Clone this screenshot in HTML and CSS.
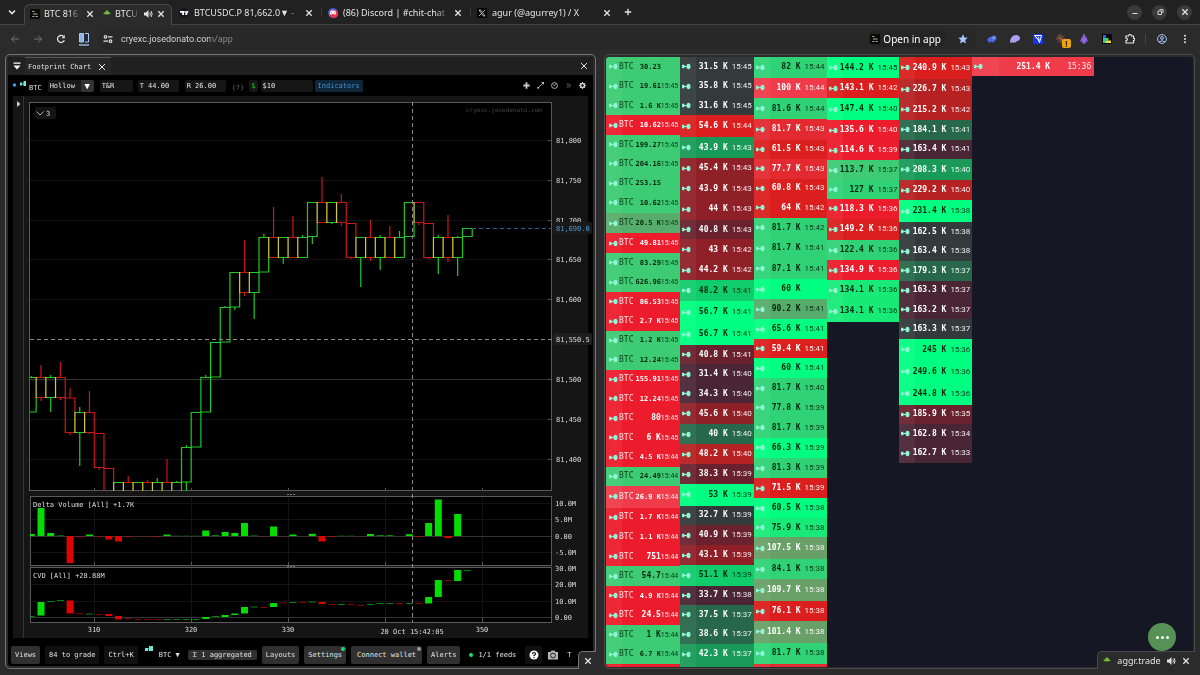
FILE: index.html
```html
<!DOCTYPE html>
<html lang="en">
<head>
<meta charset="utf-8">
<title>BTC 81,690.0</title>
<link rel="stylesheet" href="styles.css">
</head>
<body>
<svg class="sprite" aria-hidden="true">
  <symbol id="close" viewBox="0 0 10 10"><path d="M2.300 2.300l5.400 5.400M7.700 2.300l-5.400 5.400" fill="none" stroke="currentColor" stroke-width="1.300"/></symbol>
  <symbol id="speaker" viewBox="0 0 10 10"><path d="M1 3.500h2L5.500 1v8L3 6.500H1z" fill="currentColor"/><path d="M6.800 3.500q1.200 1.500 0 3M8 2q2.300 3 0 6" fill="none" stroke="currentColor" stroke-width="1"/></symbol>
  <symbol id="dumbbell" viewBox="0 0 9 7"><path d="M0 1.800h2.400v3.400H0z" fill="currentColor"/><path d="M2 3.500h4" stroke="currentColor" stroke-width="1.200"/><ellipse cx="6.500" cy="3.500" rx="2" ry="2.800" fill="currentColor"/></symbol>
  <symbol id="crylogo" viewBox="0 0 10 10"><rect width="10" height="10" rx="1" fill="#0a0a0a"/><path d="M2.200 2.500h2.300M3 5h4.500M2.300 7.500h2M5.500 7.500h2.200" stroke="#d5c3a0" stroke-width=".9"/></symbol>
  <symbol id="aggrlogo" viewBox="0 0 10 10"><path d="M5 1l4 4H1z" fill="#76b53f"/><path d="M3.500 5h3v1h-3z" fill="#4d7d2b"/></symbol>
</svg>

<header class="tabstrip">
  <button class="ghost tab-search" aria-label="Search tabs"><svg class="ico" viewBox="0 0 10 10"><path d="M2 3.500l3 3 3-3" fill="none" stroke="currentColor" stroke-width="1.600"/></svg></button>
  <div class="tab-group">
    <div class="tab tab-first"><svg class="ico"><use href="#crylogo"/></svg><span class="tab-title fade">BTC 816</span><button class="ghost" aria-label="Close"><svg class="ico"><use href="#close"/></svg></button></div>
    <div class="tab tab-second"><svg class="ico"><use href="#aggrlogo"/></svg><span class="tab-title fade">BTCU</span><svg class="ico"><use href="#speaker"/></svg><button class="ghost" aria-label="Close"><svg class="ico"><use href="#close"/></svg></button></div>
  </div>
  <div class="tab wide"><svg class="ico" viewBox="0 0 10 10"><rect width="10" height="10" rx="5" fill="#12151d"/><path d="M1 3h4v4H3.200V4.700H1z" fill="#fff"/><circle cx="6.100" cy="3.900" r=".9" fill="#fff"/><path d="M7.500 3h2L7.900 7H6z" fill="#fff"/></svg><span class="tab-title fade">BTCUSDC.P 81,662.0▼ -</span><button class="ghost" aria-label="Close"><svg class="ico"><use href="#close"/></svg></button></div>
  <div class="tab wide"><svg class="ico" viewBox="0 0 10 10"><circle cx="5" cy="5" r="4.800" fill="#5865f2"/><circle cx="6" cy="6" r="4" fill="#e8364a"/><path d="M2.500 3q2.500-1 5 0l.7 3-1.500.8-.7-.8H4l-.700.8L1.800 6z" fill="#fff"/><path d="M3.500 4.300v1M6.300 4.300v1" stroke="#e8364a"/></svg><span class="tab-title fade">(86) Discord | #chit-chat</span><button class="ghost" aria-label="Close"><svg class="ico"><use href="#close"/></svg></button></div>
  <div class="tab wide"><svg class="ico" viewBox="0 0 10 10"><rect width="10" height="10" rx="1" fill="#050505"/><path d="M2 2h1.700L8 8H6.300z" fill="none" stroke="#ddd" stroke-width=".8"/><path d="M8 2L5.600 4.600M4.400 5.600L2 8" stroke="#ddd" stroke-width=".8"/></svg><span class="tab-title">agur (@agurrey1) / X</span><button class="ghost" aria-label="Close"><svg class="ico"><use href="#close"/></svg></button></div>
  <button class="ghost new-tab" aria-label="New tab"><svg class="ico" viewBox="0 0 10 10"><path d="M5 1.800v6.400M1.800 5h6.400" stroke="currentColor" stroke-width="1.300"/></svg></button>
  <div class="window-controls">
    <button aria-label="Minimise"><svg class="ico" viewBox="0 0 10 10"><path d="M2.500 6.500h5" stroke="currentColor"/></svg></button>
    <button aria-label="Restore"><svg class="ico" viewBox="0 0 10 10"><path d="M3 4h3.500v3.500H3zM4.500 2.600H8V6" fill="none" stroke="currentColor" stroke-width=".9"/></svg></button>
    <button aria-label="Close window"><svg class="ico"><use href="#close"/></svg></button>
  </div>
</header>

<nav class="toolbar">
  <button class="ghost nav dim" aria-label="Back"><svg class="ico" viewBox="0 0 10 10"><path d="M9 5H1.500M5 1.500L1.500 5 5 8.500" fill="none" stroke="currentColor"/></svg></button>
  <button class="ghost nav dim" aria-label="Forward"><svg class="ico" viewBox="0 0 10 10"><path d="M1 5h7.500M5 1.500L8.500 5 5 8.500" fill="none" stroke="currentColor"/></svg></button>
  <button class="ghost nav" aria-label="Reload"><svg class="ico" viewBox="0 0 10 10"><path d="M8.300 6.200A3.500 3.500 0 1 1 7.500 2.500" fill="none" stroke="currentColor" stroke-width="1.300"/><path d="M8.800 1v3.200H5.600z" fill="currentColor"/></svg></button>
  <button class="ghost nav split" aria-label="Split view"><svg viewBox="0 0 12 14" width="12" height="14"><path d="M1.500 1.500h4v8.500h-4z" fill="#8fb4ea" stroke="#a8c7fa"/><path d="M7 1.500h3.500V10H7" fill="none" stroke="#a8c7fa"/><path d="M1 13h10" stroke="#a8c7fa" stroke-width="1.300"/></svg></button>
  <div class="omnibox">
    <button class="ghost site" aria-label="Site information"><svg class="ico" viewBox="0 0 10 10"><g fill="none" stroke="currentColor" stroke-width="1.200"><circle cx="2.500" cy="2.800" r="1.300"/><path d="M5 2.800h4.500M.5 7.200H5"/><circle cx="7.500" cy="7.200" r="1.300"/></g></svg></button>
    <input class="address" aria-label="Address" value="cryexc.josedonato.com/app">
    <button class="open-app"><svg class="ico"><use href="#crylogo"/></svg>Open in app</button>
    <button class="ghost star" aria-label="Bookmark"><svg class="ico" viewBox="0 0 10 10"><path d="M5 .3l1.400 3.200 3.400.3-2.600 2.300.8 3.500L5 7.800 2 9.600l.8-3.500L.2 3.800l3.400-.3z" fill="#a8c7fa"/></svg></button>
  </div>
  <div class="extensions">
    <button class="ghost" aria-label="Bird"><svg class="ico" viewBox="0 0 10 10"><path d="M0 6q2-4 5-3l2-2.500.6 2.300L10 4 8.500 6.500 6 8.500 4.500 8 2 8.500z" fill="#4a63e0"/><path d="M4 3l5-1-2 4z" fill="#7b93f5"/></svg></button>
    <button class="ghost" aria-label="Phantom"><svg class="ico" viewBox="0 0 10 10"><path d="M0 7.500Q1 1 6 1q4 0 4 3.500Q9.500 7 7 7 5.800 9 4.500 8.200 3 9.500 2.200 8.200.5 9.500 0 7.500z" fill="#ab9ff2"/></svg></button>
    <button class="ghost" aria-label="Pointer"><svg class="ico" viewBox="0 0 10 10"><rect width="10" height="10" rx="1" fill="#1436e8"/><path d="M1.500 1.500h7L6.500 8.500 5 5.500z" fill="none" stroke="#fff"/><path d="M2 2l4 4M5 2.500l1.500 4" stroke="#fff" stroke-width=".8"/></svg></button>
    <button class="ghost badge-host" aria-label="Alerts, 1 warning"><svg class="ico" viewBox="0 0 10 10"><path d="M5 0v10M0 5h10M1.500 1.500l7 7M8.500 1.500l-7 7M3 .5l4 9M.5 3l9 4" stroke="#a95c3c" stroke-width=".8"/></svg><span class="badge">!</span></button>
    <button class="ghost" aria-label="Flame"><svg class="ico" viewBox="0 0 10 10"><path d="M5 0l2.800 4L9 7 5 10 1 7l1.500-3z" fill="#7a53c9"/><path d="M5 0v10M2.500 4L5 7l3-3" stroke="#a98be8" stroke-width=".7" fill="none"/></svg></button>
    <button class="ghost" aria-label="Colour blocks"><svg class="ico" viewBox="0 0 10 10"><rect width="10" height="10" fill="#06080c"/><path d="M1 1h3v3H1z" fill="#2764f0"/><path d="M1 4h3v5H1z" fill="#27c9c0"/><path d="M4 4h2.500v2.500H4z" fill="#54d13c"/><path d="M4 6.500h5V9H4z" fill="#f2e02c"/></svg></button>
    <button class="ghost" aria-label="Extensions"><svg class="ico" viewBox="0 0 10 10"><path d="M1 2h2.500q0-1.500 1.500-1.500T6.500 2H8.500v2.200q1.200 0 1.200 1.200T8.500 6.600V9H1V6.700q1.400-.2 1.400-1.300T1 4.200z" fill="none" stroke="currentColor" stroke-width="1.200"/></svg></button>
    <i class="rule"></i>
    <button class="ghost" aria-label="Profile"><svg class="ico" viewBox="0 0 10 10"><g fill="none" stroke="#a8c7fa"><circle cx="5" cy="5" r="4.400"/><circle cx="5" cy="4" r="1.400"/><path d="M2 8q3-2.500 6 0"/></g></svg></button>
    <button class="ghost" aria-label="Menu"><svg class="ico" viewBox="0 0 10 10" fill="currentColor"><circle cx="5" cy="1.700" r="1"/><circle cx="5" cy="5" r="1"/><circle cx="5" cy="8.300" r="1"/></svg></button>
  </div>
</nav>

<main class="split-view">
  <section class="pane chart-pane">
    <div class="app">
      <div class="dock-head">
        <button class="ghost dock-menu" aria-label="Panel menu"><svg class="ico" viewBox="0 0 10 10"><path d="M1.500 2.200h7" stroke="#fff" stroke-width="1.200"/><path d="M1.500 4.500h7L5 8.500z" fill="#fff"/></svg></button>
        <div class="dock-tab"><span>Footprint Chart</span><button class="ghost" aria-label="Close tab"><svg class="ico" viewBox="0 0 10 10"><path d="M2 2l6 6M8 2l-6 6" stroke="currentColor"/></svg></button></div>
        <button class="ghost dock-close" aria-label="Close panel"><svg class="ico" viewBox="0 0 10 10"><path d="M2 2l6 6M8 2l-6 6" stroke="currentColor"/></svg></button>
      </div>
      <div class="chart-tools">
        <svg class="feed-mark" viewBox="0 0 14 8" width="14" height="8"><circle cx="2.500" cy="4" r="1.800" fill="#3b9df0"/><path d="M8 1.500h2v3H8zM10 3h2M11.500 0h2.500v5h-2.500z" fill="#6ce8d4"/><path d="M9 3h4" stroke="#6ce8d4"/></svg>
        <span class="symbol">BTC</span>
        <label class="combo"><select aria-label="Candle style"><option>Hollow</option></select><i>▼</i></label>
        <input class="field" aria-label="Preset" value="T&amp;R">
        <input class="field mid" aria-label="Ticks" value="T 44.00">
        <input class="field mid" aria-label="Range" value="R 26.00">
        <span class="hint">(?)</span>
        <button class="dollar">$</button>
        <input class="field long" aria-label="Minimum size" value="$10">
        <button class="indicators">Indicators</button>
        <div class="tool-icons">
          <button class="ghost" aria-label="Add"><svg class="ico small" viewBox="0 0 10 10"><path d="M5 .5v9M.5 5h9" stroke="currentColor" stroke-width="2.600"/></svg></button>
          <button class="ghost" aria-label="Draw"><svg class="ico small" viewBox="0 0 10 10"><path d="M2 8l6-6" stroke="currentColor" stroke-width="1.200"/><circle cx="1.700" cy="8.300" r="1.400" fill="currentColor"/><path d="M6 0h4v4z" fill="currentColor"/></svg></button>
          <button class="ghost" aria-label="Time"><svg class="ico small" viewBox="0 0 10 10"><g fill="none" stroke="currentColor" stroke-width="1.200"><circle cx="5" cy="5" r="4.200"/><path d="M5 5l2-2.500M5 5L3 4"/></g></svg></button>
          <button class="ghost faded" aria-label="More"><svg class="ico small" viewBox="0 0 10 10"><path d="M2.500 2L5 5 2.500 8M5.500 2L8 5 5.500 8" fill="none" stroke="currentColor" stroke-width="1.200"/></svg></button>
          <button class="ghost" aria-label="Chart settings"><svg class="ico small" viewBox="0 0 10 10"><circle cx="5" cy="5" r="2.800" fill="none" stroke="currentColor" stroke-width="2.200"/><path d="M5 0v2M5 8v2M0 5h2M8 5h2M1.500 1.500l1.400 1.400M7.100 7.100l1.400 1.400M8.500 1.500L7.100 2.900M2.900 7.100L1.500 8.500" stroke="currentColor" stroke-width="1.600"/></svg></button>
        </div>
      </div>
      <div class="chart-body">
        <button class="ghost drawer" aria-label="Open drawer"><svg class="ico" viewBox="0 0 10 10"><path d="M4 2l3.500 3L4 8z" fill="#ccc"/></svg></button>
        <svg id="chart" class="chart" viewBox="24 96 564 542" role="img" aria-label="Footprint chart"></svg>
      </div>
      <footer class="status">
        <button class="btn">Views</button>
        <button class="btn quiet">84 to grade</button>
        <button class="btn quiet">Ctrl+K</button>
        <svg class="status-mark" viewBox="0 0 9 8" width="9" height="8"><path d="M0 2h3v3H0zM4 0h4v5H4z" fill="#6ce8d4"/><path d="M2 3h4" stroke="#6ce8d4"/></svg>
        <button class="btn bare">BTC ▼</button>
        <button class="chip">Σ 1 aggregated</button>
        <button class="btn">Layouts</button>
        <button class="btn dotted">Settings<i class="dot on"></i></button>
        <button class="btn dotted roomy">Connect wallet<i class="dot"></i></button>
        <button class="btn">Alerts</button>
        <span class="feeds"><i></i>1/1 feeds</span>
        <button class="btn quiet square" aria-label="Help"><svg class="ico" viewBox="0 0 10 10"><circle cx="5" cy="5" r="4.500" fill="#fff"/><path d="M3.500 4q0-1.500 1.500-1.500T6.500 4Q6.500 5 5 5.200V6" fill="none" stroke="#111" stroke-width="1.200"/><circle cx="5" cy="7.500" r=".7" fill="#111"/></svg></button>
        <button class="ghost" aria-label="Screenshot"><svg viewBox="0 0 12 10" width="12" height="10"><path d="M1 2h2.500L4.500.5h3L8.500 2H11v7.500H1z" fill="#b5b5b5"/><circle cx="6" cy="5.500" r="2.400" fill="#b5b5b5" stroke="#222"/></svg></button>
        <span class="cut">T</span>
      </footer>
    </div>
    <div class="notch"><button class="ghost" aria-label="Close view"><svg class="ico"><use href="#close"/></svg></button></div>
  </section>

  <section class="pane feed-pane">
    <div id="feed" class="feed"></div>
    <button class="fab" aria-label="More options"><i></i><i></i><i></i></button>
    <div class="notch notch-wide"><svg class="ico"><use href="#aggrlogo"/></svg><span>aggr.trade</span><svg class="ico"><use href="#speaker"/></svg><button class="ghost" aria-label="Close view"><svg class="ico"><use href="#close"/></svg></button></div>
  </section>
</main>
<script src="app.js"></script>
</body>
</html>
```

FILE: styles.css
```css
* { box-sizing: border-box; }

:root {
  --ui: "Noto Sans", "Open Sans", sans-serif;
  --mono: "DejaVu Sans Mono", "Liberation Mono", monospace;
}

body {
  margin: 0;
  height: 100vh;
  display: flex;
  flex-direction: column;
  overflow: hidden;
  background: #2b2b2b;
  color: #e3e3e3;
  font: 9px/12px var(--ui);
}

button, input, select { font: inherit; color: inherit; margin: 0; }
.sprite { position: absolute; width: 0; height: 0; }
.ico { width: 10px; height: 10px; flex: none; display: block; }
.ico.small { width: 7px; height: 7px; }
.ghost {
  display: grid;
  place-items: center;
  padding: 0;
  border: 0;
  background: none;
  flex: none;
}
.dim { color: #757575; }
.faded { opacity: .6; }

/* Browser tabs */
.tabstrip {
  display: flex;
  align-items: stretch;
  height: 24px;
  flex: none;
  background: #212121;
}
.tab-search { width: 24px; }
.tab-group {
  display: flex;
  margin: 4px 0 -1px;
  background: #2b2b2b;
  border: 1px solid #484848;
  border-bottom: 0;
  border-radius: 6px 6px 0 0;
  z-index: 1;
}
.tab {
  display: flex;
  align-items: center;
  gap: 5px;
  padding: 1px 7px 0;
}
.tab-group .tab { gap: 4px; padding: 0 5px 2px; }
.tab-first { width: 75px; }
.tab-second { width: 71px; }
.tab-group .tab-second { gap: 3px; padding-left: 2px; }
.tab.wide { width: 149px; }
.wide + .wide { background: linear-gradient(#3c3c3c, #3c3c3c) left center / 1px 10px no-repeat; }
.tab-title { flex: 1; min-width: 0; overflow: hidden; white-space: nowrap; }
.fade {
  -webkit-mask-image: linear-gradient(90deg, #000 calc(100% - 12px), transparent);
  mask-image: linear-gradient(90deg, #000 calc(100% - 12px), transparent);
}
.new-tab { width: 18px; }
.window-controls {
  display: flex;
  align-items: center;
  gap: 10px;
  margin-left: auto;
  padding-right: 8px;
}
.window-controls button {
  display: grid;
  place-items: center;
  width: 15px;
  height: 15px;
  padding: 0;
  border: 0;
  border-radius: 50%;
  background: #3a3a3a;
}

/* Address bar */
.toolbar {
  display: flex;
  align-items: center;
  height: 30px;
  flex: none;
  padding: 0 4px 1px 3px;
  border-top: 1px solid #444;
}
.nav { width: 23px; height: 22px; }
.omnibox {
  display: flex;
  align-items: center;
  flex: 1;
  height: 22px;
  margin: 0 4px 0 3px;
  border-radius: 11px;
  background: #282828;
}
.site { width: 20px; margin-right: 3px; }
.address {
  flex: 1;
  min-width: 0;
  padding: 0;
  border: 0;
  outline: 0;
  font: 9px/12px Roboto, var(--ui);
  background: linear-gradient(90deg, #e3e3e3 89px, #8d8d8d 89px);
  -webkit-background-clip: text;
  background-clip: text;
  -webkit-text-fill-color: transparent;
}
.open-app {
  display: flex;
  align-items: center;
  gap: 3px;
  height: 16px;
  margin-right: 3px;
  padding: 0 5px 0 2px;
  border: 0;
  border-radius: 8px;
  background: #242424;
  color: #fff;
  font: 10px/12px var(--ui);
}
.star { width: 27px; }
.extensions { display: flex; align-items: center; }
.extensions .ghost { width: 23px; height: 22px; }
.badge-host { position: relative; }
.badge {
  position: absolute;
  right: 1px;
  bottom: 2px;
  width: 9px;
  height: 9px;
  border-radius: 2px;
  background: #f2a20c;
  color: #222;
  font: bold 8px/9px var(--ui);
}
.rule { width: 1px; height: 10px; margin: 0 4px; background: #444; }

/* Split panes */
.split-view {
  display: grid;
  grid-template-columns: 1fr 1fr;
  gap: 8px;
  flex: 1;
  min-height: 0;
  padding: 0 5px 6px;
}
.pane {
  position: relative;
  min-width: 0;
  min-height: 0;
  border: 1px solid #4a4a4a;
  border-radius: 5px;
}
.chart-pane { padding: 2px; border-color: #757575; }
.feed-pane { padding: 2px 1px 1px; }
.notch {
  position: absolute;
  right: -1px;
  bottom: -1px;
  display: flex;
  align-items: center;
  justify-content: center;
  width: 18px;
  height: 18px;
  border: 1px solid #757575;
  border-width: 1px 0 0 1px;
  border-radius: 5px 0 0 0;
  background: #2b2b2b;
}
.notch-wide {
  gap: 5px;
  width: 98px;
  border-color: #4a4a4a;
}

/* Chart application */
.app {
  display: flex;
  flex-direction: column;
  height: 100%;
  overflow: hidden;
  border-radius: 3px;
  background: #000;
  color: #e2e2e2;
  font: 7px/10px var(--mono);
}
.dock-head {
  display: flex;
  align-items: stretch;
  height: 18px;
  flex: none;
  background: #202020;
}
.dock-menu { width: 17px; }
.dock-tab {
  display: flex;
  align-items: center;
  gap: 6px;
  padding: 0 4px 0 3px;
  border-top: 1px solid #555;
  background: #262626;
}
.dock-close { width: 18px; margin-left: auto; }
.chart-tools {
  display: flex;
  align-items: center;
  height: 21px;
  flex: none;
  padding: 0 4px 0 4px;
}
.feed-mark { align-self: flex-start; margin-top: 6px; }
.symbol { padding: 5px 6px 0 3px; }
.combo {
  display: flex;
  align-items: center;
  height: 12px;
  margin-right: 6px;
  border-radius: 2px;
  overflow: hidden;
  background: #191919;
}
.combo select {
  appearance: none;
  width: 33px;
  height: 12px;
  padding: 0 2px;
  border: 0;
  background: none;
}
.combo i {
  width: 13px;
  background: #333;
  color: #fff;
  font-size: 9px;
  font-style: normal;
  line-height: 12px;
  text-align: center;
}
.field {
  width: 33px;
  height: 12px;
  margin-right: 5px;
  padding: 0 2px;
  border: 0;
  border-radius: 2px;
  background: #161616;
}
.field.mid { width: 41px; margin-right: 6px; }
.field.long { width: 52px; margin: 0 2px 0 3px; }
.hint { padding-top: 4px; margin-right: 5px; color: #6d6d6d; }
.dollar, .indicators {
  height: 12px;
  padding: 0 2px;
  border: 0;
  border-radius: 2px;
  background: #161616;
  color: #12d012;
  line-height: 12px;
}
.indicators { background: #10273b; color: #4390cf; padding: 0 3px; }
.tool-icons { display: flex; margin-left: auto; color: #c9c9c9; }
.tool-icons .ghost { width: 14px; }
.chart-body {
  display: flex;
  flex: 1;
  min-height: 0;
  padding: 0 5px;
}
.drawer {
  width: 11px;
  padding-top: 3px;
  align-content: start;
  border-right: 1px solid #333;
  background: #161616;
}
.chart { flex: 1; min-width: 0; height: 100%; overflow: visible; background: #151515; }
.chart text { font: 7px var(--mono); fill: #dcdcdc; }
.chart .mid { text-anchor: middle; }
.chart .live { fill: #4a97d8; }
.chart .faint { font-size: 6px; fill: #444; }
.frame { fill: #000; stroke: #5a5a5a; }
.grid { stroke: #131313; }
.grid.strong { stroke: #333; }
.tick { stroke: #555; }
.cross { stroke: #8a8a8a; stroke-dasharray: 4 3; }
.last { stroke: #2d5f92; stroke-dasharray: 4 3; }
.candle { fill: none; mix-blend-mode: screen; stroke-width: 1.2; }
.candle.up { stroke: #22c822; }
.candle.down { stroke: #c81818; }
.bar.up { fill: #04dc04; }
.bar.down { fill: #dc0404; }
.bar.thin { opacity: .6; }

/* Status bar */
.status {
  display: flex;
  align-items: center;
  gap: 5px;
  height: 28px;
  flex: none;
  padding: 6px 3px 0;
  white-space: nowrap;
}
.btn {
  height: 18px;
  padding: 0 4px;
  border: 0;
  border-radius: 2px;
  background: #303030;
  flex: none;
}
.roomy { padding: 0 6px; }
.quiet { background: #101010; }
.square { width: 17px; padding: 0; display: grid; place-items: center; }
.bare { background: none; padding: 0 3px 0 0; }
.status-mark { align-self: flex-start; margin: 2px 0 0 2px; flex: none; }
.chip {
  height: 10px;
  padding: 0 5px;
  border: 0;
  border-radius: 2px;
  background: #303030;
  line-height: 10px;
  flex: none;
}
.dotted { position: relative; }
.dot {
  position: absolute;
  top: 1px;
  right: 1px;
  width: 4px;
  height: 4px;
  border-radius: 50%;
  background: #999;
}
.dot.on { background: #16d97c; }
.feeds { display: flex; align-items: center; gap: 5px; padding: 0 4px; flex: none; }
.feeds i { width: 4px; height: 4px; border-radius: 50%; background: #14e07a; }
.cut { padding-left: 3px; }

/* Trade feed */
.feed {
  display: grid;
  grid-template-columns: 74fr 74fr 73fr 73fr 73fr 122fr 99fr;
  height: 100%;
  overflow: hidden;
  border-radius: 3px;
  background: #151824;
}
.lane { min-width: 0; min-height: 0; height: 100%; }
.trade {
  display: flex;
  align-items: center;
  padding: 0 2px 0 2px;
  overflow: hidden;
  color: #fff;
  font: 8px/10px var(--mono);
  white-space: pre;
  background-image: linear-gradient(90deg, rgba(255, 255, 255, .05) 22%, transparent 22%);
}
.trade svg { width: 9px; height: 7px; flex: none; color: #8ff5d4; }
.trade b { flex: 1; text-align: right; }
.trade time { flex: none; width: 20px; margin-left: 4px; font-family: Roboto, sans-serif; opacity: .9; }
.named { padding-right: 1px; padding-left: 3px; }
.named span { margin-left: 1px; opacity: .85; }
.named time { width: 18px; margin-left: 0; font-size: 7px; }
.named .snug { font-size: 7px; }
.spread time { width: 25px; margin-left: 17px; font-family: var(--mono); }

.mint, .spring, .neon, .jade, .lime, .sage { color: #06260f; }
.mint { background-color: #3dcb73; }
.spring { background-color: #2fd376; }
.neon { background-color: #00ff80; }
.jade { background-color: #10cc6a; }
.lime { background-color: #18ea78; }
.sage { background-color: #56ac6a; }
.moss { background-color: #69a067; }
.green { background-color: #1a9a58; }
.pine { background-color: #27684a; }
.slate { background-color: #333b3a; }
.dusk { background-color: #4a2635; }
.plum { background-color: #69222d; }
.wine { background-color: #8f2028; }
.brick { background-color: #b62122; }
.crimson { background-color: #da1f1e; }
.scarlet { background-color: #e32a31; }
.red { background-color: #ec1c2c; }
.rose { background-color: #ef3b4a; }

.fab {
  position: absolute;
  right: 18px;
  bottom: 17px;
  display: flex;
  align-items: center;
  justify-content: center;
  gap: 2px;
  width: 28px;
  height: 28px;
  padding: 0;
  border: 0;
  border-radius: 50%;
  background: #589155;
}
.fab i { width: 3px; height: 3px; border-radius: 50%; background: #fff; }
```

FILE: app.js
```js
/* Trades: amount | time | tone | lower edge on the feed's 57..667 scale */
const FEED_TOP = 57;
const FEED_SPAN = 609;
const lanes = [
  { kind: 'named', rows: `30.23||mint|76.4
19.61|15:45|mint|95.8
1.6 K|15:45|mint|115.2
10.62|15:45|red|134.6
199.27|15:45|mint|154
204.16|15:45|mint|173.4
253.15||mint|192.8
10.62|15:45|mint|212.2
20.5 K|15:45|sage|233
49.81|15:45|red|252.4
83.29|15:45|mint|271.8
626.96|15:45|mint|291.2
86.53|15:45|red|310.6
2.7 K|15:45|red|330
1.2 K|15:45|mint|349.4
12.24|15:45|mint|368.8
155.91|15:45|red|388.2
12.24|15:45|red|407.6
80|15:45|red|427
6 K|15:45|red|446.4
4.5 K|15:44|red|465.6
24.49|15:44|mint|485
26.9 K|15:44|rose|506.4
1.7 K|15:44|red|526
1.1 K|15:44|red|545.6
751|15:44|red|565
54.7|15:44|mint|584.6
4.9 K|15:44|red|604
24.5|15:44|red|623.6
1 K|15:44|mint|643
6.7 K|15:44|mint|662.6
||red|667` },
  { kind: '', rows: `31.5 K|15:45|slate|76.4
35.8 K|15:45|slate|95.8
31.6 K|15:45|slate|115.2
54.6 K|15:44|crimson|137
43.9 K|15:43|green|158
45.4 K|15:43|wine|178.4
43.9 K|15:43|wine|198.9
44 K|15:43|wine|219.5
40.8 K|15:43|plum|239
43 K|15:42|wine|260
44.2 K|15:42|wine|280
48.2 K|15:41|jade|301
56.7 K|15:41|neon|323
56.7 K|15:41|neon|345
40.8 K|15:41|plum|364
31.4 K|15:40|dusk|383.5
34.3 K|15:40|dusk|403
45.6 K|15:40|wine|423.5
40 K|15:40|pine|443.5
48.2 K|15:40|brick|463.7
38.3 K|15:39|plum|483.4
53 K|15:39|neon|505
32.7 K|15:39|slate|524.6
40.9 K|15:39|plum|544.3
43.1 K|15:39|wine|564.5
51.1 K|15:39|jade|585
33.7 K|15:38|dusk|604.4
37.5 K|15:37|pine|624
38.6 K|15:37|pine|643
42.3 K|15:37|green|664
||green|667` },
  { kind: '', rows: `82 K|15:44|spring|77.7
100 K|15:44|rose|98
81.6 K|15:44|spring|119
81.7 K|15:43|scarlet|139.5
61.5 K|15:43|crimson|159
77.7 K|15:43|scarlet|178.5
60.8 K|15:43|crimson|198
64 K|15:42|crimson|217.5
81.7 K|15:42|spring|238
81.7 K|15:41|spring|258
87.1 K|15:41|spring|279
60 K||neon|299
90.2 K|15:41|sage|319
65.6 K|15:41|neon|338.5
59.4 K|15:41|crimson|358
60 K|15:41|neon|378
81.7 K|15:40|spring|397.5
77.8 K|15:39|spring|417.5
81.7 K|15:39|spring|437.5
66.3 K|15:39|neon|457.5
81.3 K|15:39|spring|478
71.5 K|15:39|crimson|498
60.5 K|15:38|neon|517.5
75.9 K|15:38|lime|537
107.5 K|15:38|moss|558.5
84.1 K|15:38|spring|579
109.7 K|15:38|moss|601
76.1 K|15:38|crimson|620.5
101.4 K|15:38|moss|642
81.7 K|15:38|spring|663
||scarlet|667` },
  { kind: '', rows: `144.2 K|15:45|neon|78
143.1 K|15:42|crimson|98.3
147.4 K|15:40|neon|120
135.6 K|15:40|red|140.5
114.6 K|15:39|red|160.2
113.7 K|15:37|mint|180
127 K|15:37|spring|199
118.3 K|15:36|red|218.5
149.2 K|15:36|crimson|240
122.4 K|15:36|spring|260
134.9 K|15:36|red|280
134.1 K|15:36|lime|300.5
134.1 K|15:36|lime|321.5` },
  { kind: '', rows: `240.9 K|15:43|crimson|78.5
226.7 K|15:43|brick|99.5
215.2 K|15:42|brick|120
184.1 K|15:41|pine|139.5
163.4 K|15:41|dusk|159
208.3 K|15:40|green|180
229.2 K|15:40|brick|200
231.4 K|15:38|neon|222
162.5 K|15:38|slate|241.5
163.4 K|15:38|slate|261
179.3 K|15:37|pine|280.3
163.3 K|15:37|dusk|299.7
163.2 K|15:37|dusk|319
163.3 K|15:37|slate|338.5
245 K|15:36|neon|360.5
249.6 K|15:36|neon|382.5
244.8 K|15:36|neon|404.5
185.9 K|15:35|plum|423.7
162.8 K|15:34|dusk|443
162.7 K|15:33|dusk|462.5` },
  { kind: 'spread', rows: '251.4 K|15:36|rose|76' }
];

document.getElementById('feed').innerHTML = lanes.map(({ kind, rows }) => {
  let edge = FEED_TOP;
  return '<div class="lane">' + rows.split('\n').map(row => {
    const [amount, time, tone, bottom] = row.split('|');
    const height = ((bottom - edge) / FEED_SPAN * 100).toFixed(2);
    edge = +bottom;
    const fit = amount.length > 4 ? 'snug' : '';
    const body = amount
      ? `<svg><use href="#dumbbell"/></svg>${kind === 'named' ? '<span>BTC</span>' : ''}<b class="${fit}">${amount}</b><time>${time}</time>`
      : '';
    return `<div class="trade ${kind} ${tone}" style="height:${height}%">${body}</div>`;
  }).join('') + '</div>';
}).join('');

/* Chart */
const STEP = 9.69;
const barX = i => 41 + STEP * (i - 1);
const line = (x1, y1, x2, y2, cls) => `<line x1="${x1}" y1="${y1}" x2="${x2}" y2="${y2}" class="${cls}"/>`;
const text = (x, y, value, cls = '') => `<text x="${x}" y="${y}" class="${cls}">${value}</text>`;

/* direction, body top, body bottom, high, low */
const candles = [
  ['u', 377.5, 412, 376, 412], ['d', 377.5, 397.5, 365, 401], ['u', 377.5, 397.5, 375, 412],
  ['d', 377.5, 397.5, 362, 400], ['d', 398, 432.5, 388, 435], ['u', 412.5, 432.5, 407, 466],
  ['d', 412.5, 432.5, 391, 434], ['d', 433.5, 467.5, 433, 470], ['d', 468.5, 500, 468, 500],
  ['u', 482.5, 500, 482, 500], ['d', 482.5, 500, 476, 500], ['u', 482.5, 500, 482, 500],
  ['d', 482.5, 500, 480, 500], ['u', 482.5, 500, 478, 500], ['d', 482.5, 500, 459, 500],
  ['u', 482.5, 500, 481, 500], ['u', 447.5, 482, 445, 500], ['u', 412.5, 447, 412, 447],
  ['u', 377.5, 412, 375, 412], ['u', 342.5, 377, 342, 377], ['u', 307.5, 342, 306, 342],
  ['u', 272.5, 307, 272, 310], ['d', 272.5, 292.5, 240, 296], ['u', 272.5, 292.5, 272, 319],
  ['u', 237.5, 272, 234, 272], ['d', 237.5, 257.5, 207, 258], ['u', 237.5, 257.5, 237, 264],
  ['d', 237.5, 257.5, 216, 258], ['u', 237.5, 257.5, 235, 258], ['u', 202.5, 236.5, 202, 244],
  ['d', 202.5, 222.5, 177, 223], ['u', 202.5, 222.5, 202, 224], ['d', 202.5, 222.5, 194, 226],
  ['d', 223.5, 257.5, 223, 259], ['u', 237.5, 257.5, 237, 287], ['d', 237.5, 257.5, 220, 261],
  ['u', 237.5, 257.5, 235, 270], ['d', 237.5, 257.5, 226, 258], ['u', 237.5, 257.5, 231, 258],
  ['u', 202.5, 236.5, 202, 237], ['d', 202.5, 222.5, 202, 225], ['d', 223.5, 257.5, 223, 259],
  ['u', 237.5, 257.5, 235, 274], ['d', 237.5, 257.5, 215, 262], ['u', 237.5, 257.5, 236, 276],
  ['u', 228.5, 236.5, 228, 237]
];
const delta = [2, 28, 3, .7, -27, -1, 1.5, -.7, -3.5, -5.5, -1, -.3, -.3, -1, 1.5, .3, .3, .3, 5.5, 1, 4, 3,
  13, .6, -.4, 9.5, -.3, 1.5, -.3, 2.2, -5.5, -1, .3, .3, -.3, 2, 1, 1, -.3, 1.8, -1, 13, 36.5, -2, 22];
const cvd = [['u', 616, 617], ['u', 602, 615.5], ['u', 601, 602], ['u', 600, 601], ['d', 600.5, 613.5],
  ['d', 613, 614], ['u', 613.5, 614.5], ['d', 614, 615], ['d', 614, 616], ['d', 616, 619.5], ['d', 618, 619],
  ['d', 619, 620], ['d', 619, 620], ['d', 619, 620], ['u', 619, 620], ['u', 619, 620], ['u', 619, 620],
  ['u', 619, 620], ['u', 617, 619], ['u', 616, 617], ['u', 615, 617], ['u', 613.5, 615], ['u', 607, 613.5],
  ['u', 606.5, 607.5], ['d', 607, 608], ['u', 603, 607], ['d', 602.5, 603.5], ['u', 602, 603], ['d', 602, 603],
  ['u', 601.5, 602.5], ['d', 602, 604], ['d', 604, 605], ['u', 604, 605], ['d', 604, 605], ['d', 605, 606],
  ['u', 604, 605], ['u', 603, 604], ['u', 603, 604], ['d', 603, 604], ['u', 603, 604], ['d', 603, 604],
  ['u', 597, 603.5], ['u', 580, 597], ['d', 580, 581], ['u', 570, 581], ['u', 570, 571]];

const bar = (i, top, bottom, up) => {
  const height = bottom - top;
  return `<rect x="${barX(i) - 3.5}" y="${top}" width="7" height="${height}" class="bar ${up ? 'up' : 'down'} ${height <= 1 ? 'thin' : ''}"/>`;
};
const columns = [94.5, 191.5, 288.5, 385.5, 482.5];
const levels = [[140.5, '81,800'], [180.5, '81,750'], [220.5, '81,700'], [259.5, '81,650'], [299.5, '81,600'],
  [379.5, '81,500'], [419.5, '81,450'], [459.5, '81,400']];

let out = `<defs><clipPath id="plot"><rect x="30" y="102" width="522" height="389"/></clipPath>
<clipPath id="sub"><rect x="30" y="497" width="522" height="126"/></clipPath></defs>
<rect x="29.5" y="102.5" width="522" height="388" class="frame"/>
<rect x="30.5" y="496.5" width="521" height="69" class="frame"/>
<rect x="30.5" y="567.5" width="521" height="55" class="frame"/>`;

levels.forEach(([y, label]) => {
  out += line(30, y, 551, y, y === 379.5 ? 'grid strong' : 'grid') + line(548, y, 552, y, 'tick') + text(556, y + 2.5, label);
});
columns.forEach(x => {
  out += line(x, 488, x, 491, 'tick') + line(x, 497, x, 565, 'grid') + line(x, 562, x, 565, 'tick')
    + line(x, 568, x, 622, 'grid') + line(x, 618, x, 622, 'tick');
});
[[503, '10.0M'], [519.5, '5.0M'], [536, '0.00'], [552.5, '-5.0M'], [568.5, '30.0M'], [584.5, '20.0M'], [601, '10.0M'], [617, '0.00']]
  .forEach(([y, label]) => {
    const row = Math.floor(y) + .5;
    if (label !== '30.0M') out += line(31, row, 551, row, label === '0.00' ? 'grid strong' : 'grid');
    out += text(555, y + 2.5, label);
  });

out += '<g clip-path="url(#plot)">';
candles.forEach(([dir, top, bottom, high, low], i) => {
  const x = barX(i);
  out += `<path class="candle ${dir === 'u' ? 'up' : 'down'}" d="M${x - STEP / 2} ${top}h${STEP}V${bottom}h${-STEP}zM${x} ${high}V${top}M${x} ${bottom}V${low}"/>`;
});
out += '</g><g clip-path="url(#sub)">';
delta.forEach((v, i) => { out += bar(i, v > 0 ? 536 - v : 536, v > 0 ? 536 : 536 - v, v > 0); });
cvd.forEach(([dir, top, bottom], i) => { out += bar(i, top, bottom, dir === 'u'); });
out += '</g>';

out += line(30, 339.5, 552, 339.5, 'cross') + line(412.5, 102, 412.5, 622, 'cross') + line(472, 228.5, 552, 228.5, 'last')
  + '<rect x="553" y="222" width="39" height="12" rx="2" fill="#1a1a1a"/>' + text(556, 231, '81,690.0', 'live')
  + '<rect x="553" y="333" width="39" height="12" rx="2" fill="#1f1f1f"/>' + text(556, 342, '81,550.5')
  + '<rect x="35" y="107" width="21" height="12" rx="2" fill="#141414"/><path d="M36.5 111.5l3.5 3.5 3.5-3.5" fill="none" stroke="#aaa"/>' + text(46, 116, '3')
  + text(466, 112, 'cryexc.josedonato.com', 'faint')
  + text(33, 507, 'Delta Volume [All] +1.7K') + text(33, 578, 'CVD [All] +28.88M')
  + text(94, 632, '310', 'mid') + text(191, 632, '320', 'mid') + text(288, 632, '330', 'mid')
  + text(412, 634, '20 Oct 15:42:05', 'mid') + text(482, 632, '350', 'mid')
  + '<path d="M287 494.5h8M287 566.5h8" stroke="#777" stroke-dasharray="2 1"/>';
document.getElementById('chart').innerHTML = out;
```
